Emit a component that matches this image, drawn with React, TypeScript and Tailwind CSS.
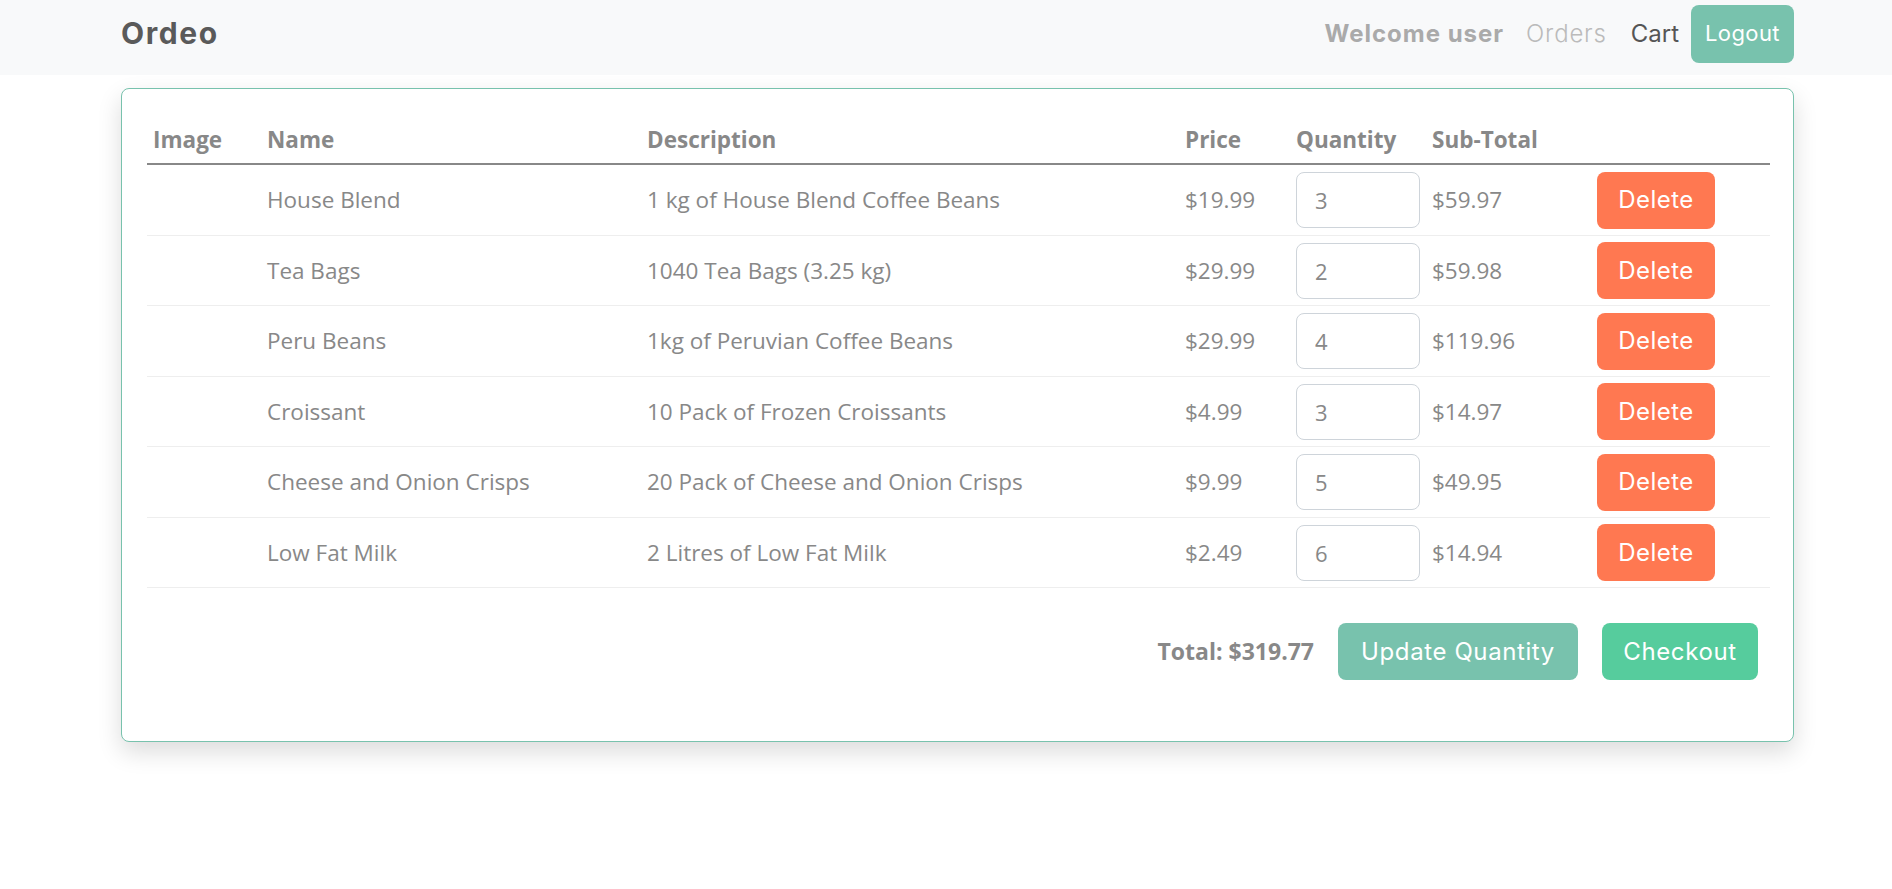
import { useState } from "react"

type Item = {
  id: number
  name: string
  description: string
  price: number
  qty: number
}

const initialItems: Item[] = [
  { id: 1, name: "House Blend", description: "1 kg of House Blend Coffee Beans", price: 19.99, qty: 3 },
  { id: 2, name: "Tea Bags", description: "1040 Tea Bags (3.25 kg)", price: 29.99, qty: 2 },
  { id: 3, name: "Peru Beans", description: "1kg of Peruvian Coffee Beans", price: 29.99, qty: 4 },
  { id: 4, name: "Croissant", description: "10 Pack of Frozen Croissants", price: 4.99, qty: 3 },
  { id: 5, name: "Cheese and Onion Crisps", description: "20 Pack of Cheese and Onion Crisps", price: 9.99, qty: 5 },
  { id: 6, name: "Low Fat Milk", description: "2 Litres of Low Fat Milk", price: 2.49, qty: 6 },
]

const heading = "font-['Inter','Liberation_Sans',sans-serif]"
const body = "font-['Open_Sans','Noto_Sans',sans-serif]"
const cols = "grid grid-cols-[114px_380px_538px_111px_136px_165px_179px]"

const money = (n: number) => "$" + n.toFixed(2)

function Navbar() {
  return (
    <header className="h-[75px] bg-[#f8f9fa]">
      <div className={`ml-[121px] w-[1673px] h-full flex items-center justify-between ${heading}`}>
        <a href="#" className="text-[30px] font-bold text-[#5a5a5a] tracking-[1.6px] pb-[8px]">
          Ordeo
        </a>
        <nav className="flex items-center h-full pb-[8px]">
          <span className="text-[24px] font-bold text-[#aaaaaa] tracking-[1px]">Welcome user</span>
          <a href="#" className="ml-[22px] text-[24px] text-[#bbbbbb] font-light tracking-[0.8px]">Orders</a>
          <a href="#" className="ml-[24px] text-[24px] text-[#555555]">Cart</a>
          <button className="ml-[12px] w-[103px] h-[58px] rounded-[8px] bg-[#78c2ad] text-white text-[22px] tracking-[0.4px]">
            Logout
          </button>
        </nav>
      </div>
    </header>
  )
}

export default function App() {
  const [items, setItems] = useState(initialItems)

  const total = items.reduce((s, i) => s + i.price * i.qty, 0)

  return (
    <div className="min-h-[889px] bg-white">
      <Navbar />

      {/* Cart card */}
      <div className="ml-[121px] mt-[13px] w-[1673px] rounded-[8px] border border-[#78c2ad] bg-white shadow-[0_10px_24px_rgba(0,0,0,0.14)] pl-[25px] pr-[23px] pt-[25px] pb-[61px]">
        <div className={`${body} text-[#888888]`}>
          <div className={`${cols} h-[51px] pt-[11px] border-b-2 border-[#888888] text-[22.5px] font-bold leading-[30px]`}>
            <div className="px-[6px]">Image</div>
            <div className="px-[6px]">Name</div>
            <div className="px-[6px]">Description</div>
            <div className="px-[6px]">Price</div>
            <div className="px-[6px]">Quantity</div>
            <div className="px-[6px]">Sub-Total</div>
            <div className="px-[6px]"></div>
          </div>

          {items.map((item) => (
            <div key={item.id} className={`${cols} h-[70.5px] items-center border-b border-[#eeeeee] text-[22.5px] pt-[1px]`}>
              <div className="px-[6px]"></div>
              <div className="px-[6px]">{item.name}</div>
              <div className="px-[6px]">{item.description}</div>
              <div className="px-[6px]">{money(item.price)}</div>
              <div className="px-[6px]">
                <input
                  type="number"
                  value={item.qty}
                  onChange={(e) =>
                    setItems(items.map((i) => (i.id === item.id ? { ...i, qty: Number(e.target.value) } : i)))
                  }
                  className="w-[124px] h-[56px] rounded-[8px] border border-[#ced4da] pl-[18px] text-[22px] text-[#888888] outline-none [appearance:textfield] [&::-webkit-inner-spin-button]:appearance-none"
                />
              </div>
              <div className="px-[6px]">{money(item.price * item.qty)}</div>
              <div className="px-[6px]">
                <button
                  onClick={() => setItems(items.filter((i) => i.id !== item.id))}
                  className={`w-[118px] h-[57px] rounded-[8px] bg-[#ff7851] text-white text-[24px] tracking-[0.5px] ${heading}`}
                >
                  Delete
                </button>
              </div>
            </div>
          ))}

          {/* Footer */}
          <div className="mt-[35px] flex items-center justify-end pr-[12px] gap-[24px]">
            <span className="text-[23px] font-bold text-[#888888]">Total: {money(total)}</span>
            <button className={`w-[240px] h-[57px] rounded-[8px] bg-[#78c2ad] text-white text-[24px] tracking-[0.6px] ${heading}`}>
              Update Quantity
            </button>
            <button className={`w-[156px] h-[57px] rounded-[8px] bg-[#56cc9d] text-white text-[24px] tracking-[0.6px] ${heading}`}>
              Checkout
            </button>
          </div>
        </div>
      </div>
    </div>
  )
}
